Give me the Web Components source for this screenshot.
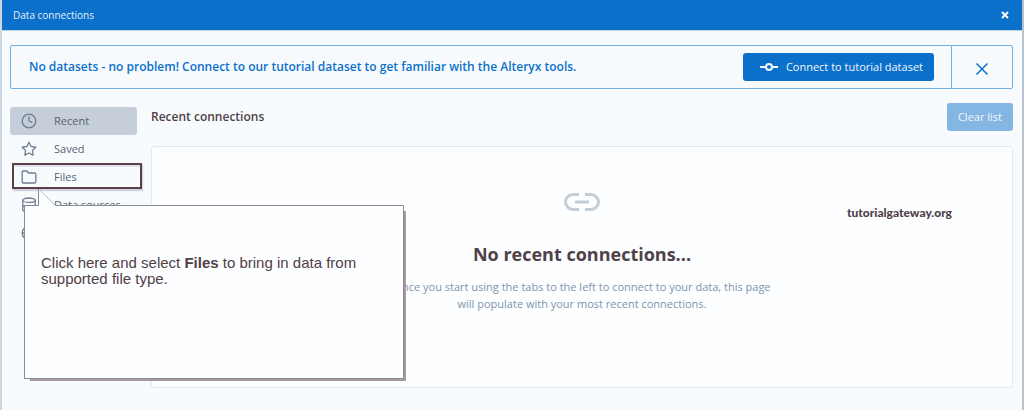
<!DOCTYPE html>
<html lang="en">
<head>
<meta charset="utf-8">
<title>Data connections</title>
<style>
  html, body { margin: 0; height: 100%; }
  body { background: #f8fbfe; color: #4f4148; font-family: "Open Sans", "Noto Sans", sans-serif; font-size: 11px; line-height: 16px; }
</style>
</head>
<body>
<data-window>
  <title-bar slot="title">Data connections</title-bar>
  <tutorial-banner slot="banner">No datasets - no problem! Connect to our tutorial dataset to get familiar with the Alteryx tools.</tutorial-banner>
  <side-nav slot="nav"></side-nav>
  <recent-panel></recent-panel>
  <help-callout slot="overlay">Click here and select <b>Files</b> to bring in data from<br>supported file type.</help-callout>
</data-window>

<script>
const define = (name, html) => customElements.define(name, class extends HTMLElement {
  constructor() {
    super();
    const t = document.createElement('template');
    t.innerHTML = html;
    this.attachShadow({ mode: 'open' }).append(t.content.cloneNode(true));
  }
});

define('data-window', `
<style>
  :host { display: flex; flex-direction: column; position: relative; min-height: 100vh; box-sizing: border-box;
    border-left: 2px solid #cdd8e3; border-right: 2px solid #b9c2cc; }
  .content { flex: 1; display: flex; flex-direction: column; padding: 14px 9px 22px 8px; border-top: 1px solid #c5d4e2; }
  .columns { flex: 1; display: flex; gap: 14px; padding-top: 14px; }
</style>
<slot name="title"></slot>
<div class="content">
  <slot name="banner"></slot>
  <div class="columns"><slot name="nav"></slot><slot></slot></div>
</div>
<slot name="overlay"></slot>`);

define('title-bar', `
<style>
  :host { display: flex; align-items: center; justify-content: space-between; height: 30px; padding: 0 13px 0 11px;
    background: #0b70ca; color: #e3effa; font-size: 10px; }
  button { display: flex; padding: 0; border: 0; background: none; color: #fff; }
</style>
<span><slot></slot></span>
<button aria-label="Close window"><svg width="8" height="8" viewBox="0 0 8 8" fill="none" stroke="currentColor" stroke-width="2"><path d="M1 1l6 6M7 1L1 7"/></svg></button>`);

define('tutorial-banner', `
<style>
  :host { display: flex; align-items: stretch; min-height: 42px; border: 1px solid #76b0e3; border-radius: 2px; color: #0b70ca; }
  .text { flex: 1; display: flex; align-items: center; justify-content: space-between; padding: 0 17px 0 18px; }
  strong { font-size: 12px; font-weight: 650; }
  .connect { display: flex; align-items: center; gap: 8px; height: 28px; padding: 0 11px 0 17px; border: 0; border-radius: 3px;
    background: #0b70ca; color: #f0f7fd; font: inherit; }
  .dismiss { display: flex; align-items: center; justify-content: center; width: 61px; padding: 4px 0 0; border: 0;
    border-left: 1px solid #76b0e3; background: none; color: inherit; }
</style>
<div class="text">
  <strong><slot></slot></strong>
  <button class="connect"><svg width="18" height="10" viewBox="0 0 18 10" fill="none" stroke="currentColor" stroke-width="2"><circle cx="9" cy="5" r="3"/><path d="M0 5h6M12 5h6"/></svg>Connect to tutorial dataset</button>
</div>
<button class="dismiss" aria-label="Dismiss"><svg width="12" height="12" viewBox="0 0 12 12" fill="none" stroke="currentColor" stroke-width="1.5"><path d="M.5.5l11 11M11.5.5l-11 11"/></svg></button>`);

define('nav-item', `
<style>
  :host { display: block; }
  button { display: flex; align-items: center; gap: 17px; width: 100%; height: 28px; padding: 0 11px; border: 0; border-radius: 3px;
    background: none; color: #566371; font: inherit; }
  :host([selected]) button { background: #c6cfd9; color: #5a626e; }
</style>
<button><slot name="icon"></slot><slot></slot></button>`);

define('side-nav', `
<style>
  :host { display: block; flex: none; width: 127px; padding-top: 4px; }
  svg { display: block; width: 16px; height: 16px; fill: none; stroke: #6c7e91; stroke-width: 1.3; stroke-linejoin: round; stroke-linecap: round; }
</style>
<nav>
  <nav-item selected><svg slot="icon" viewBox="0 0 16 16"><circle cx="8" cy="8" r="6.8"/><path d="M8 3.8V8l2.8 1.4"/></svg>Recent</nav-item>
  <nav-item><svg slot="icon" viewBox="0 0 16 16"><path d="M8 1.2l2.1 4.3 4.7.7-3.4 3.3.8 4.7L8 12l-4.200 2.200.8-4.700L1.200 6.200l4.700-.7z"/></svg>Saved</nav-item>
  <nav-item><svg slot="icon" viewBox="0 0 16 16"><path d="M1.2 12.8V3.2q0-1.2 1.2-1.2h3.4l1.6 2h6.2q1.2 0 1.2 1.2v7.6q0 1.2-1.2 1.2H2.4q-1.2 0-1.2-1.2z"/></svg>Files</nav-item>
  <nav-item><svg slot="icon" viewBox="0 0 16 16"><ellipse cx="8" cy="3.2" rx="6.2" ry="2.2"/><path d="M1.8 3.2v9.6c0 3 12.4 3 12.4 0V3.2M1.8 8c0 3 12.4 3 12.4 0"/></svg>Data sources</nav-item>
  <nav-item><svg slot="icon" viewBox="0 0 16 16"><circle cx="8" cy="8" r="6.8"/><path d="M1.2 8h13.6M8 1.2c-4 4-4 9.6 0 13.6M8 1.2c4 4 4 9.6 0 13.6"/></svg></nav-item>
</nav>`);

define('recent-panel', `
<style>
  :host { flex: 1; display: flex; flex-direction: column; gap: 15px; }
  header { display: flex; align-items: center; justify-content: space-between; height: 28px; }
  h1, h2, p { margin: 0; }
  h1 { font-size: 12px; line-height: 16px; font-weight: 650; }
  button { height: 28px; padding: 0 11px; border: 0; border-radius: 3px; background: #84b6e4; color: #f0f7fd; font: inherit; }
  section { position: relative; flex: 1; display: flex; flex-direction: column; align-items: center; box-sizing: border-box; padding-top: 46px;
    border: 1px solid #e0e8f1; border-radius: 3px; background: #fdfeff; text-align: center; }
  h2 { padding: 27px 0 8px; font-size: 18px; line-height: 32px; font-weight: 700; }
  p { max-width: 392px; color: #7c95ae; line-height: 17px; }
  .mark { position: absolute; top: 58px; right: 60px; font: 900 12px/16px Lato, sans-serif; }
</style>
<header><h1>Recent connections</h1><button>Clear list</button></header>
<section>
  <svg width="36" height="18" viewBox="0 0 36 18" fill="none" stroke="#c3cdd8" stroke-width="3"><path d="M15 1.5H9a7.5 7.5 0 0 0 0 15h6M21 1.5h6a7.5 7.5 0 0 1 0 15h-6M11 9h14"/></svg>
  <h2>No recent connections...</h2>
  <p>Once you start using the tabs to the left to connect to your data, this page will populate with your most recent connections.</p>
  <span class="mark">tutorialgateway.org</span>
</section>`);

define('help-callout', `
<style>
  :host { position: absolute; z-index: 1; left: 10px; top: 163px; }
  .target { width: 126px; height: 22px; border: 2px solid #5d4046; box-shadow: 1px 2px 1px #cbd4df, inset 0 2px 0 #dce5ef; }
  .box { position: absolute; left: 12px; top: 42px; width: 380px; height: 174px; box-sizing: border-box; padding: 49px 40px 0 16px;
    border: 1px solid #8d8b90; background: #fdfeff; color: #4f4045; font: 15px/16px "Liberation Sans", Arial, sans-serif; }
  .shadow { position: absolute; left: 18px; top: 48px; width: 376px; height: 170px; background: #a59a9e; }
  .tail { position: absolute; left: 26px; top: 26px; }
</style>
<div class="target"></div>
<div class="shadow"></div>
<div class="box"><slot></slot></div>
<svg class="tail" width="20" height="17" viewBox="0 0 20 17"><path d="M.5 17V0l17 17z" fill="#fdfeff"/><path d="M.5 17V0" stroke="#8d8b90"/><path d="M.5 0l17 16.5" stroke="#b7bcc5"/></svg>`);
</script>
</body>
</html>
